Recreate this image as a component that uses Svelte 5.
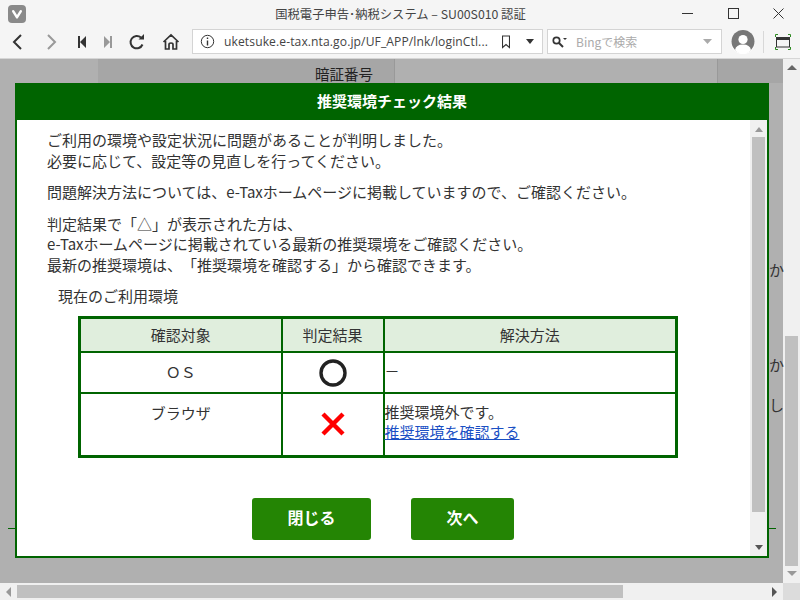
<script>
  const checks = [
    { target: 'ＯＳ', result: 'ok', solution: '－' },
    { target: 'ブラウザ', result: 'ng', solution: '推奨環境外です。', link: '推奨環境を確認する' }
  ];
</script>

<div class="window">
  <header class="titlebar">
    <svg class="logo" width="18" height="18" viewBox="0 0 18 18">
      <rect width="18" height="18" rx="4" fill="#8a8a8a" />
      <path d="M4 6.2 Q4 5 5.2 5 Q6 5 6.5 5.9 L9 10 L11.5 5.9 Q12 5 12.8 5 Q14 5 14 6.2 Q14 6.7 13.6 7.3 L10 13 Q9.5 13.8 9 13.8 Q8.5 13.8 8 13 L4.4 7.3 Q4 6.7 4 6.2Z" fill="#fff" />
    </svg>
    <div class="title">国税電子申告･納税システム – SU00S010 認証</div>
    <div class="winbtns">
      <svg width="11" height="11" viewBox="0 0 11 11"><path d="M0 5.5H11" stroke="#333" fill="none" /></svg>
      <svg width="11" height="11" viewBox="0 0 11 11"><rect x=".5" y=".5" width="10" height="10" stroke="#333" fill="none" /></svg>
      <svg width="11" height="11" viewBox="0 0 11 11"><path d="M.5 .5L10.5 10.5M10.5 .5L.5 10.5" stroke="#333" fill="none" /></svg>
    </div>
  </header>

  <nav class="toolbar">
    <svg class="nav-back" width="12" height="18" viewBox="0 0 12 18"><path d="M10 2L3 9L10 16" stroke="#333" stroke-width="2" fill="none" /></svg>
    <svg class="nav-fwd" width="12" height="18" viewBox="0 0 12 18"><path d="M2 2L9 9L2 16" stroke="#999" stroke-width="2" fill="none" /></svg>
    <svg class="nav-first" width="10" height="12" viewBox="0 0 10 12"><path d="M1 0H3V12H1ZM3 6L9 0V12Z" fill="#333" /></svg>
    <svg class="nav-last" width="10" height="12" viewBox="0 0 10 12"><path d="M7 0H9V12H7ZM7 6L1 0V12Z" fill="#999" /></svg>
    <svg class="nav-reload" width="18" height="18" viewBox="0 0 18 18"><path d="M14.5 11.5A6.2 6.2 0 1 1 13 4.6" stroke="#333" stroke-width="2" fill="none" /><path d="M10.5 6.5H16V1Z" fill="#333" /></svg>
    <svg class="nav-home" width="18" height="18" viewBox="0 0 18 18"><path d="M1.5 9L9 2L16.5 9M3.5 8V16H7V11.5Q7 10 9 10Q11 10 11 11.5V16H14.5V8" stroke="#333" stroke-width="1.7" fill="none" /></svg>

    <div class="urlbar">
      <svg width="15" height="15" viewBox="0 0 15 15"><circle cx="7.5" cy="7.5" r="6.2" stroke="#333" fill="none" /><path d="M7.5 6.5V11.5M7.5 3.5V5" stroke="#333" stroke-width="1.4" /></svg>
      <span class="url">uketsuke.e-tax.nta.go.jp/UF_APP/lnk/loginCtl...</span>
      <svg width="8" height="14" viewBox="0 0 8 14"><path d="M.5 1H7.5V12.5L4 9.5L.5 12.5Z" stroke="#333" stroke-width="1.1" fill="none" /></svg>
      <svg class="drop" width="8" height="5" viewBox="0 0 8 5"><path d="M0 0H8L4 5Z" fill="#333" /></svg>
    </div>

    <div class="searchbar">
      <svg width="16" height="12" viewBox="0 0 16 12"><circle cx="4.5" cy="4.5" r="3.2" stroke="#333" stroke-width="1.7" fill="none" /><path d="M7 7L11 11" stroke="#333" stroke-width="2" /><path d="M11 2H15L13 4Z" fill="#333" /></svg>
      <span class="search-text">Bingで検索</span>
      <svg class="drop" width="9" height="6" viewBox="0 0 9 6"><path d="M0 0H9L4.5 5Z" fill="#aaa" /></svg>
    </div>

    <svg class="avatar" width="24" height="24" viewBox="0 0 24 24">
      <circle cx="12" cy="12" r="12" fill="#fff" />
      <circle cx="12" cy="11.5" r="11.5" fill="#777" />
      <circle cx="12" cy="9.5" r="4.6" fill="#fff" />
      <path d="M4 20Q5 14.5 12 14.5Q19 14.5 20 20Q16.5 24 12 24Q7.5 24 4 20Z" fill="#fff" />
    </svg>
    <div class="sep"></div>
    <svg width="16" height="16" viewBox="0 0 16 16">
      <path d="M.5 3V.5H3M13 .5H15.5V3M15.5 13V15.5H13M3 15.5H.5V13" stroke="#2e8b22" fill="none" />
      <rect x="1.5" y="3.5" width="13" height="9.5" stroke="#333" fill="none" />
      <path d="M2 5H14" stroke="#333" stroke-width="2" />
    </svg>
  </nav>

  <div class="viewport">
    <main class="page">
      <div class="page-row">
        <div class="cell-side"></div>
        <div class="cell-label">暗証番号</div>
        <div class="cell-value"></div>
        <div class="cell-end"></div>
      </div>
    </main>
    <div class="vscroll">
      <svg width="10" height="6" viewBox="0 0 10 6"><path d="M5 0L10 5H0Z" fill="#666" /></svg>
      <div class="vtrack"><div class="vthumb"></div></div>
      <svg width="10" height="6" viewBox="0 0 10 6"><path d="M0 0H10L5 5Z" fill="#999" /></svg>
    </div>
  </div>

  <div class="hscroll">
    <svg width="6" height="10" viewBox="0 0 6 10"><path d="M5 0V10L0 5Z" fill="#999" /></svg>
    <div class="htrack"><div class="hthumb"></div></div>
    <svg width="6" height="10" viewBox="0 0 6 10"><path d="M0 0V10L5 5Z" fill="#555" /></svg>
    <div class="corner"></div>
  </div>

  <span class="behind" style="top: 262px">か</span>
  <span class="behind" style="top: 357px">か</span>
  <span class="behind" style="top: 397px">し</span>
  <div class="tick tick-left"></div>
  <div class="tick tick-right"></div>

  <section class="modal">
    <h2 class="modal-head">推奨環境チェック結果</h2>
    <div class="modal-body">
      <div class="content">
        <p>ご利用の環境や設定状況に問題があることが判明しました。<br />必要に応じて、設定等の見直しを行ってください。</p>
        <p>問題解決方法については、e-Taxホームページに掲載していますので、ご確認ください。</p>
        <p>判定結果で「△」が表示された方は、<br />e-Taxホームページに掲載されている最新の推奨環境をご確認ください。<br />最新の推奨環境は、「推奨環境を確認する」から確認できます。</p>
        <p class="env">現在のご利用環境</p>

        <table>
          <thead>
            <tr>
              <th class="col-target">確認対象</th>
              <th class="col-result">判定結果</th>
              <th>解決方法</th>
            </tr>
          </thead>
          <tbody>
            {#each checks as row}
              <tr>
                <td class="target">{row.target}</td>
                <td class="result">
                  {#if row.result === 'ok'}
                    <svg width="28" height="28" viewBox="0 0 28 28"><circle cx="14" cy="14" r="12" stroke="#222" stroke-width="3.4" fill="none" /></svg>
                  {:else}
                    <svg width="24" height="24" viewBox="0 0 24 24"><path d="M2 2L22 22M22 2L2 22" stroke="#f00" stroke-width="4.4" fill="none" /></svg>
                  {/if}
                </td>
                <td class="solution">
                  {row.solution}
                  {#if row.link}<br /><a href="#top">{row.link}</a>{/if}
                </td>
              </tr>
            {/each}
          </tbody>
        </table>

        <div class="actions">
          <button class="close">閉じる</button>
          <button class="next">次へ</button>
        </div>
      </div>

      <div class="inner-scroll">
        <svg width="8" height="5" viewBox="0 0 8 5"><path d="M4 0L8 5H0Z" fill="#999" /></svg>
        <div class="inner-track"><div class="inner-thumb"></div></div>
        <svg width="8" height="5" viewBox="0 0 8 5"><path d="M0 0H8L4 5Z" fill="#555" /></svg>
      </div>
    </div>
  </section>
</div>

<style>
  :global(body) {
    margin: 0;
    font-family: "Noto Sans CJK JP", "Noto Sans", sans-serif;
    text-spacing-trim: space-all;
  }

  .window {
    position: relative;
    width: 800px;
    height: 600px;
    overflow: hidden;
    display: flex;
    flex-direction: column;
    background: #f5f5f5;
    color: #333;
  }

  .titlebar {
    height: 29px;
    display: flex;
    align-items: center;
    padding-left: 8px;
    box-sizing: border-box;
    flex: none;
  }

  .logo {
    margin-top: -2px;
  }

  .title {
    flex: 1;
    text-align: center;
    font-size: 12.3px;
    color: #444;
    padding-left: 98px;
    margin-top: -1px;
  }

  .winbtns {
    display: flex;
    gap: 34.5px;
    padding-right: 16px;
    padding-left: 5px;
    margin-top: -3px;
  }

  .toolbar {
    height: 30px;
    flex: none;
    display: flex;
    align-items: center;
    box-sizing: border-box;
    border-bottom: 1px solid #d6d6d6;
    padding-left: 11px;
    padding-bottom: 4px;
  }

  .nav-fwd { margin-left: 23px; }
  .nav-first { margin-left: 19px; }
  .nav-last { margin-left: 16px; }
  .nav-reload { margin-left: 15px; }
  .nav-home { margin-left: 16px; }

  .urlbar,
  .searchbar {
    height: 25px;
    background: #fff;
    border: 1px solid #d4d4d4;
    box-sizing: border-box;
    display: flex;
    align-items: center;
    font-size: 12px;
  }

  .urlbar {
    width: 351px;
    margin-left: 12px;
    padding: 0 8px 0 7px;
  }

  .url {
    flex: 1;
    padding-left: 9px;
    color: #444;
    white-space: nowrap;
    overflow: hidden;
    font-family: "Open Sans", sans-serif;
    font-size: 12.1px;
    letter-spacing: 0.1px;
  }

  .drop {
    margin-left: 16px;
  }

  .searchbar {
    width: 175px;
    margin-left: 4px;
    padding: 0 9px 0 4px;
  }

  .search-text {
    flex: 1;
    padding-left: 8px;
    color: #aaa;
  }

  .avatar {
    margin-left: 9px;
    margin-top: 1px;
  }

  .sep {
    width: 1px;
    height: 22px;
    background: #d8d8d8;
    margin: 0 11px 0 8px;
  }

  .viewport {
    flex: 1;
    min-height: 0;
    display: flex;
  }

  .page {
    flex: 1;
    background: #b0b0b0;
  }

  .page-row {
    height: 24px;
    display: flex;
    font-size: 14.5px;
    color: #222;
  }

  .cell-side {
    width: 98px;
  }

  .cell-label {
    width: 275px;
    padding-right: 21px;
    background: #a6a6a6;
    border-right: 1px solid #999;
    text-align: right;
    padding-top: 5px;
    box-sizing: content-box;
    height: 19px;
    line-height: 20px;
  }

  .cell-value {
    width: 322px;
    border-right: 1px solid #999;
  }

  .cell-end {
    flex: 1;
    background: #a6a6a6;
  }

  .vscroll {
    width: 17px;
    flex: none;
    background: #f0f0f0;
    display: flex;
    flex-direction: column;
    align-items: center;
    padding: 6px 0;
    box-sizing: border-box;
  }

  .vtrack {
    flex: 1;
    width: 13px;
    padding-top: 263px;
    padding-bottom: 5px;
    margin-top: 2px;
    display: flex;
  }

  .vthumb {
    flex: 1;
    background: #c0c0c0;
  }

  .hscroll {
    height: 17px;
    flex: none;
    background: #f0f0f0;
    display: flex;
    align-items: center;
    padding-left: 6px;
  }

  .htrack {
    flex: 1;
    height: 13px;
    padding: 0 149px 0 5px;
    display: flex;
  }

  .hthumb {
    flex: 1;
    background: #c0c0c0;
  }

  .corner {
    width: 17px;
    height: 17px;
    background: #dcdcdc;
    margin-left: 5px;
  }

  .behind {
    position: absolute;
    left: 769px;
    font-size: 15px;
    line-height: 16px;
    color: #333;
  }

  .tick {
    position: absolute;
    top: 528px;
    height: 1px;
    width: 7px;
    background: #006400;
  }

  .tick-left { left: 8px; }
  .tick-right { left: 769px; }

  .modal {
    position: absolute;
    left: 15px;
    top: 83px;
    width: 754px;
    height: 475px;
    box-sizing: border-box;
    border: 2px solid #006400;
    border-top: 0;
    display: flex;
    flex-direction: column;
    background: #fff;
  }

  .modal-head {
    height: 37px;
    margin: 0;
    flex: none;
    background: #006400;
    color: #fff;
    font-size: 15px;
    font-weight: 700;
    line-height: 35px;
    text-align: center;
  }

  .modal-body {
    flex: 1;
    min-height: 0;
    display: flex;
  }

  .content {
    flex: 1;
    padding: 10px 0 0 30px;
    font-size: 15px;
    line-height: 20.5px;
    color: #333;
  }

  .content p {
    margin: 0 0 11px;
  }

  .content p.env {
    margin: 0 0 9px 11px;
  }

  table {
    border-collapse: collapse;
    table-layout: fixed;
    width: 600px;
    margin-left: 31px;
    border: 3px solid #006400;
    line-height: 20px;
  }

  th,
  td {
    border: 2px solid #006400;
    padding: 0;
    font-weight: 400;
    box-sizing: border-box;
  }

  th {
    background: #e0eedd;
    height: 35px;
    text-align: center;
  }

  .col-target { width: 202px; }
  .col-result { width: 102px; }

  tbody tr:first-child td {
    height: 41px;
  }

  tbody tr:last-child td {
    height: 63px;
  }

  .target {
    text-align: center;
    vertical-align: top;
    padding-top: 9px;
  }

  .result {
    text-align: center;
    vertical-align: middle;
  }

  .result svg {
    display: block;
    margin: 0 auto;
  }

  .solution {
    vertical-align: top;
    padding-top: 8px;
  }

  a {
    color: #1a4fc4;
  }

  .actions {
    display: flex;
    gap: 40px;
    margin-top: 40px;
    margin-left: 205px;
  }

  button {
    height: 42px;
    border: 0;
    border-radius: 3px;
    background: #248504;
    color: #fff;
    font: 700 16px "Noto Sans CJK JP", sans-serif;
    padding: 0 0 3px;
  }

  .close { width: 119px; }
  .next { width: 103px; }

  .inner-scroll {
    width: 17px;
    flex: none;
    background: #f0f0f0;
    display: flex;
    flex-direction: column;
    align-items: center;
    padding: 7px 0 6px;
    box-sizing: border-box;
  }

  .inner-track {
    flex: 1;
    width: 13px;
    padding: 5px 0 33px;
    display: flex;
  }

  .inner-thumb {
    flex: 1;
    background: #c0c0c0;
  }
</style>
